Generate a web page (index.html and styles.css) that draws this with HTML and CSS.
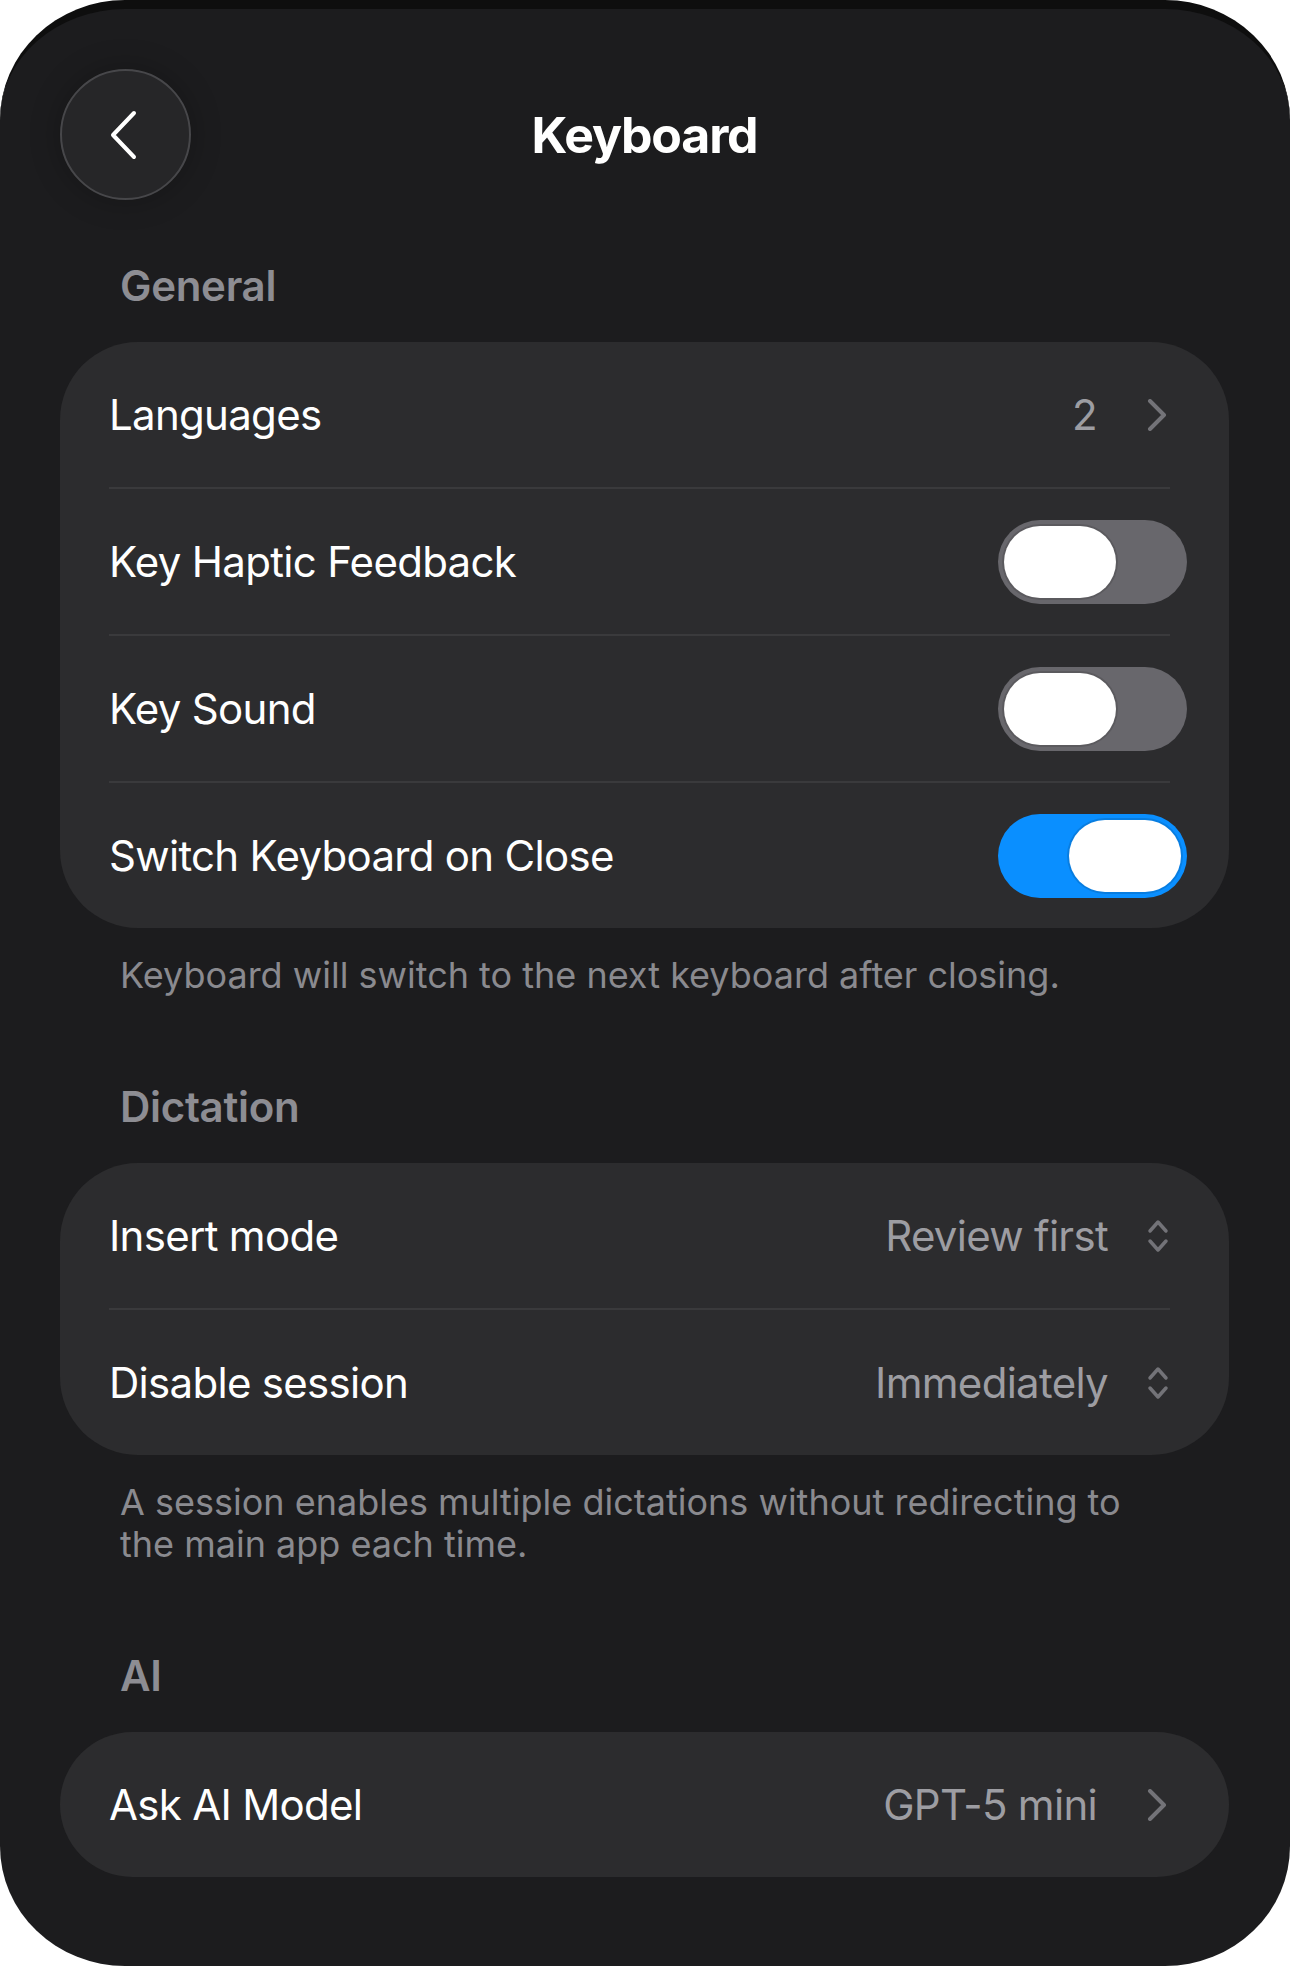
FILE: index.html
```html
<!DOCTYPE html>
<html lang="en">
<head>
    <meta charset="UTF-8">
    <meta name="viewport" content="width=device-width, initial-scale=1.0">
    <title>Keyboard</title>
    <link rel="stylesheet" href="styles.css">
</head>
<body>

    <div class="screen">

        <!-- top bar -->
        <header class="topbar">
            <button class="back-button" aria-label="Back">
                <svg width="30" height="50" viewBox="0 0 30 50">
                    <path d="M26 3 L5 25 L26 47" fill="none" stroke="#fff" stroke-width="4" stroke-linecap="round" stroke-linejoin="round"/>
                </svg>
            </button>
            <h1 class="title">Keyboard</h1>
            <span></span>
        </header>

        <!-- General -->
        <section class="group">
            <h2 class="group-title">General</h2>
            <div class="card">
                <div class="row">
                    <span class="label">Languages</span>
                    <span class="value value-nav">2</span>
                    <svg class="chevron" width="20" height="32" viewBox="0 0 20 32">
                        <path d="M3 2 L17 16 L3 30" fill="none" stroke="#737378" stroke-width="4" stroke-linecap="round" stroke-linejoin="round"/>
                    </svg>
                </div>
                <div class="divider"></div>
                <div class="row">
                    <span class="label">Key Haptic Feedback</span>
                    <span class="toggle"><span class="knob"></span></span>
                </div>
                <div class="divider"></div>
                <div class="row">
                    <span class="label">Key Sound</span>
                    <span class="toggle"><span class="knob"></span></span>
                </div>
                <div class="divider"></div>
                <div class="row">
                    <span class="label">Switch Keyboard on Close</span>
                    <span class="toggle on"><span class="knob"></span></span>
                </div>
            </div>
            <p class="note">Keyboard will switch to the next keyboard after closing.</p>
        </section>

        <!-- Dictation -->
        <section class="group">
            <h2 class="group-title">Dictation</h2>
            <div class="card">
                <div class="row">
                    <span class="label">Insert mode</span>
                    <span class="value value-menu">Review first</span>
                    <svg class="updown" width="22" height="36" viewBox="0 0 22 36">
                        <path d="M3 13 L11 4 L19 13 M3 23 L11 32 L19 23" fill="none" stroke="#737378" stroke-width="3.5" stroke-linecap="round" stroke-linejoin="round"/>
                    </svg>
                </div>
                <div class="divider"></div>
                <div class="row">
                    <span class="label">Disable session</span>
                    <span class="value value-menu">Immediately</span>
                    <svg class="updown" width="22" height="36" viewBox="0 0 22 36">
                        <path d="M3 13 L11 4 L19 13 M3 23 L11 32 L19 23" fill="none" stroke="#737378" stroke-width="3.5" stroke-linecap="round" stroke-linejoin="round"/>
                    </svg>
                </div>
            </div>
            <p class="note">A session enables multiple dictations without redirecting to the main app each time.</p>
        </section>

        <!-- AI -->
        <section class="group">
            <h2 class="group-title">AI</h2>
            <div class="card">
                <div class="row">
                    <span class="label">Ask AI Model</span>
                    <span class="value value-nav">GPT-5 mini</span>
                    <svg class="chevron" width="20" height="32" viewBox="0 0 20 32">
                        <path d="M3 2 L17 16 L3 30" fill="none" stroke="#737378" stroke-width="4" stroke-linecap="round" stroke-linejoin="round"/>
                    </svg>
                </div>
            </div>
        </section>

    </div>

</body>
</html>
```

FILE: styles.css
```css
body {
    margin: 0;
    background-color: #ffffff;
    font-family: "Inter", "Roboto", sans-serif;
}

/* phone screen */
.screen {
    width: 1290px;
    height: 1966px;
    box-sizing: border-box;
    background-color: #1c1c1e;
    border-top: 9px solid #0e0e0e;
    border-radius: 125px / 120px;
    overflow: hidden;
}

/* top bar */
.topbar {
    display: grid;
    grid-template-columns: 131px 1fr 131px;
    align-items: center;
    padding: 60px 61px 0 60px;
}

.back-button {
    width: 131px;
    height: 131px;
    padding: 0;
    border-radius: 50%;
    background-color: #262628;
    border: 2px solid #47474a;
    box-shadow: 0 0 30px rgba(0, 0, 0, 0.25);
    display: flex;
    align-items: center;
    justify-content: center;
    cursor: pointer;
}

.back-button svg {
    margin-right: 6px;
}

.title {
    margin: 0;
    text-align: center;
    color: #ffffff;
    font-size: 50px;
    font-weight: 700;
    letter-spacing: -1.2px;
}

/* groups */
.group {
    margin-top: 86px;
}

.topbar + .group {
    margin-top: 61px;
}

.group-title {
    margin: 0 0 31px;
    padding-left: 120px;
    color: #8d8d93;
    font-size: 42px;
    font-weight: 600;
    line-height: 50px;
    letter-spacing: -0.3px;
}

.card {
    margin: 0 61px 0 60px;
    background-color: #2c2c2e;
    border-radius: 78px;
}

.row {
    display: flex;
    align-items: center;
    height: 145px;
    padding: 0 42px 0 49px;
}

.label {
    flex: 1;
    color: #ffffff;
    font-size: 42px;
    letter-spacing: -0.7px;
}

.value {
    color: #9d9da2;
    font-size: 42px;
    letter-spacing: -0.7px;
}

.value-nav {
    margin-right: 50px;
}

.value-menu {
    margin-right: 39px;
}

.chevron {
    margin-right: 20px;
}

.updown {
    margin-right: 18px;
}

.divider {
    height: 2px;
    margin: 0 59px 0 49px;
    background-color: #3a3a3c;
}

/* switches */
.toggle {
    display: flex;
    width: 189px;
    height: 84px;
    box-sizing: border-box;
    padding: 6px;
    border-radius: 42px;
    background-color: #68676c;
}

.toggle.on {
    justify-content: flex-end;
    background-color: #0a8fff;
}

.knob {
    width: 112px;
    height: 72px;
    border-radius: 36px;
    background-color: #ffffff;
    box-shadow: 0 0 0 2px rgba(0, 0, 0, 0.12);
}

.note {
    margin: 26px 0 0;
    padding: 0 140px 0 120px;
    color: #8a8a8f;
    font-size: 36px;
    line-height: 42px;
}
```
